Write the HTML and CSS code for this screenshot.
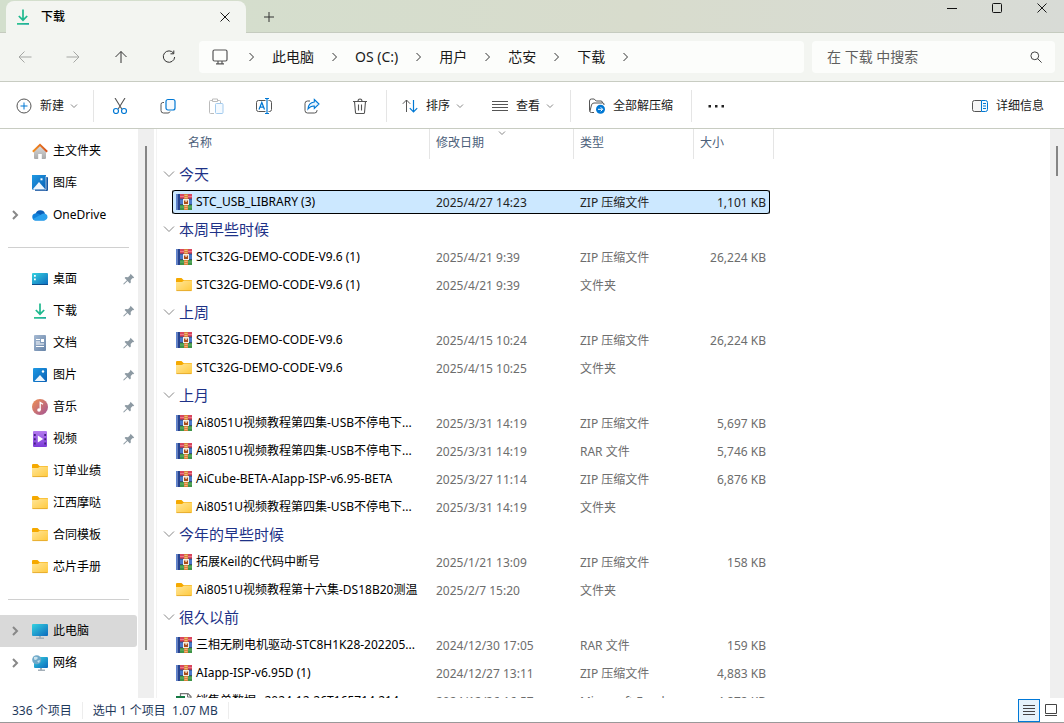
FILE: index.html
```html
<!DOCTYPE html>
<html lang="zh-CN">
<head>
    <meta charset="UTF-8">
    <meta name="viewport" content="width=device-width, initial-scale=1.0">
    <title>下载</title>
    <link rel="stylesheet" href="styles.css">
</head>
<body>
    <svg class="sprite" aria-hidden="true">
        <defs>
            <linearGradient id="g-folder" x1="0" y1="0" x2="1" y2="1"><stop offset="0" stop-color="#ffe69a"/><stop offset="1" stop-color="#ffc93c"/></linearGradient>
            <linearGradient id="g-blue" x1="0" y1="0" x2="1" y2="1"><stop offset="0" stop-color="#1f9ae4"/><stop offset="1" stop-color="#0a5fb4"/></linearGradient>
            <linearGradient id="g-screen" x1="0" y1="0" x2="1" y2="1"><stop offset="0" stop-color="#35d3e0"/><stop offset="1" stop-color="#0d69bd"/></linearGradient>
            <linearGradient id="g-down" x1="0" y1="0" x2="1" y2="1"><stop offset="0" stop-color="#36cf8b"/><stop offset="1" stop-color="#089c9c"/></linearGradient>
            <linearGradient id="g-music" x1="0" y1="0" x2="1" y2="1"><stop offset="0" stop-color="#f09252"/><stop offset="1" stop-color="#a35396"/></linearGradient>
            <linearGradient id="g-video" x1="0" y1="0" x2="0" y2="1"><stop offset="0" stop-color="#b57bef"/><stop offset="1" stop-color="#7d3bd8"/></linearGradient>
            <linearGradient id="g-doc" x1="0" y1="0" x2="1" y2="1"><stop offset="0" stop-color="#a5b9d2"/><stop offset="1" stop-color="#6784a8"/></linearGradient>
            <linearGradient id="g-house" x1="0" y1="0" x2="0" y2="1"><stop offset="0" stop-color="#dedede"/><stop offset="1" stop-color="#a9a9a9"/></linearGradient>
            <linearGradient id="g-roof" x1="0" y1="0" x2="1" y2="0"><stop offset="0" stop-color="#f5921e"/><stop offset="1" stop-color="#d5511f"/></linearGradient>
        </defs>
        <symbol id="i-folder" viewBox="0 1 16 16">
            <path d="M0 3a1 1 0 0 1 1-1h4.500l2 2H15a1 1 0 0 1 1 1v3H0z" fill="#f5a900"/>
            <path d="M0 6h6l2-1.500h7a1 1 0 0 1 1 1V14a1 1 0 0 1-1 1H1a1 1 0 0 1-1-1z" fill="url(#g-folder)"/>
            <path d="M.5 14.600h15" stroke="#e0a325" stroke-width=".8"/>
        </symbol>
        <symbol id="i-rar" viewBox="0 0 16 16">
            <path d="M4 0h12v5H4z" fill="#d9455d"/>
            <path d="M4 5h12v5.500H4z" fill="#4a78c8"/>
            <path d="M4 10.500h12V16H4z" fill="#3f9447"/>
            <path d="M4 2.500h12" stroke="#e8788a"/>
            <path d="M4 13h12" stroke="#69b56f"/>
            <path d="M4 5h12M4 10.500h12" stroke="#27386b" stroke-width=".8"/>
            <path d="M0 0h1.500v16H0z" fill="#5c82cf"/>
            <path d="M1.500 0H4v16H1.500z" fill="#26438f"/>
            <path d="M8 0h4v16H8z" fill="#d9813a"/>
            <path d="M8.500 1.500h3M8.500 3.500h3M8.500 12.500h3M8.500 14.500h3" stroke="#f4c28c" stroke-width=".8"/>
            <path d="M7 5h6v6H7z" fill="#f5efe3"/>
            <path d="M8 6.500h4V10H8z" fill="#a84d1b"/>
            <path d="M9.500 5.500h1.200V8H9.500z" fill="#f5efe3"/>
        </symbol>
        <symbol id="i-excel" viewBox="0 0 16 16">
            <path d="M4.500.6H12l3 3v11.800H4.500z" fill="#fff" stroke="#777" stroke-width="1.200"/>
            <path d="M11.500.6V4H15" fill="none" stroke="#777"/>
            <path d="M0 3h9v9H0z" fill="#157a43"/>
            <path d="M2.500 5l4 5M6.500 5l-4 5" stroke="#fff"/>
        </symbol>
        <symbol id="i-down" viewBox="0 0 16 16">
            <path d="M8 .5v10.500M3.800 7L8 11.200 12.200 7" fill="none" stroke="#1fb98f" stroke-width="1.700"/>
            <path d="M2 14h12v1.700H2z" fill="url(#g-down)"/>
        </symbol>
        <symbol id="i-home" viewBox="0 0 16 16">
            <path d="M2 7.500L8 2l6 5.500V15a1 1 0 0 1-1 1H9.800v-5H6.200v5H3a1 1 0 0 1-1-1z" fill="url(#g-house)"/>
            <path d="M.8 8.800L8 1.800l7.200 7" fill="none" stroke="url(#g-roof)" stroke-width="1.900"/>
        </symbol>
        <symbol id="i-gallery" viewBox="0 0 16 16">
            <path d="M3 2h12a1 1 0 0 1 1 1v12a1 1 0 0 1-1 1H3z" fill="#1656a2"/>
            <path d="M0 0h14v14.500H0z" fill="url(#g-blue)"/>
            <path d="M14 1v13.800H2" fill="none" stroke="#fff" stroke-width=".6"/>
            <path d="M1 14l6-7 6 7z" fill="#eef6fd"/>
            <path d="M8.500 3.300h2v2h-2z" fill="#fff"/>
        </symbol>
        <symbol id="i-picture" viewBox="0 0 16 16">
            <rect x="1" y="1" width="14" height="14" rx="1" fill="url(#g-blue)"/>
            <path d="M2.500 14L8 8l5.500 6z" fill="#eef6fd"/>
            <circle cx="11" cy="4.500" r="1.200" fill="#fff"/>
        </symbol>
        <symbol id="i-cloud" viewBox="0 0 16 16">
            <path d="M3.500 7A5 5 0 0 1 13 6.500L9 10z" fill="#0a5eb8"/>
            <path d="M3.500 13.500A3.500 3.500 0 0 1 3 6.600Q6 5.500 8.500 8l4 5.500z" fill="#1182db"/>
            <path d="M3.300 13.500Q1.500 13 1 12L10.500 6.800Q12 6 13.300 6.800A3.500 3.500 0 0 1 12.800 13.500z" fill="#2aa1ee"/>
        </symbol>
        <symbol id="i-desktop" viewBox="0 0 16 16">
            <rect y="2" width="16" height="12" rx="1" fill="url(#g-screen)"/>
            <path d="M0 13h16v1H0z" fill="#0e4d8b"/>
            <path d="M2 4h1.800v1.800H2zM2 7.500h1.800v1.800H2z" fill="#fff"/>
        </symbol>
        <symbol id="i-doc" viewBox="0 0 16 16">
            <rect x="2" y="0" width="12" height="16" rx="1" fill="url(#g-doc)"/>
            <path d="M4 4.500h4M4 7h4M4 9h8M4 11.500h8" stroke="#fff"/>
            <path d="M9 4h3v3H9z" fill="#fff"/>
        </symbol>
        <symbol id="i-music" viewBox="0 0 16 16">
            <circle cx="8" cy="8" r="8" fill="url(#g-music)"/>
            <circle cx="7" cy="11" r="1.800" fill="#fff"/>
            <path d="M8.200 11V3.500l2.800 1.700" fill="none" stroke="#fff" stroke-width="1.300"/>
        </symbol>
        <symbol id="i-video" viewBox="0 0 16 16">
            <rect x="1" y="0" width="14" height="16" rx="1" fill="url(#g-video)"/>
            <path d="M2.800 3v11M13.200 3v11" stroke="#43207f" stroke-width="1.800" stroke-dasharray="2 2.200"/>
            <path d="M5.800 4.500l5.400 3.500-5.400 3.500z" fill="#fff"/>
        </symbol>
        <symbol id="i-pc" viewBox="0 0 16 16">
            <rect y="1" width="16" height="12" rx="1" fill="url(#g-screen)"/>
            <path d="M7 13h2v1.500h3V16H4v-1.500h3z" fill="#a4afb8"/>
        </symbol>
        <symbol id="i-net" viewBox="0 0 16 16">
            <rect x="2" y="2" width="14" height="11" rx="1" fill="url(#g-screen)"/>
            <path d="M8 13h2v1.500h3V16H6v-1.500h2z" fill="#a4afb8"/>
            <circle cx="4.700" cy="4.700" r="4.500" fill="#6fa9c9"/>
            <path d="M2 2q3-1 4 1l-2 2-2-.5zM5 6l3-1-1 3z" fill="#c9e3ee"/>
        </symbol>
        <symbol id="i-pin" viewBox="0 0 12 12">
            <path d="M7.500.8l3.700 3.700-1 .7-.5-.1-2 2 .1 2.400-.9.900-2.400-2.400L1.200 11.300l-.8.100.1-.8L3.900 7.300 1.600 5l.9-.9 2.500.1 2-2z" fill="#8d9aa3"/>
        </symbol>
        <symbol id="i-right" viewBox="0 0 10 10"><path d="M3 1l4 4-4 4" fill="none" stroke="currentColor"/></symbol>
        <symbol id="i-chev" viewBox="0 0 12 12"><path d="M1 3.500l5 5 5-5" fill="none" stroke="currentColor"/></symbol>
        <symbol id="i-mini" viewBox="0 0 8 8"><path d="M1 2.500l3 3 3-3" fill="none" stroke="currentColor"/></symbol>
        <symbol id="i-close" viewBox="0 0 12 12"><path d="M1.500 1.500l9 9M10.500 1.500l-9 9" fill="none" stroke="currentColor"/></symbol>
    </svg>

    <header class="titlebar">
        <div class="tab">
            <svg class="icon"><use href="#i-down"/></svg>
            <span class="tab-title">下载</span>
            <button class="tab-close" aria-label="关闭标签页"><svg class="small"><use href="#i-close"/></svg></button>
        </div>
        <button class="tab-add" aria-label="新建标签页"><svg class="small" viewBox="0 0 12 12"><path d="M6 1v10M1 6h10" stroke="#333"/></svg></button>
        <div class="window-buttons">
            <button aria-label="最小化"><svg class="small" viewBox="0 0 12 12"><path d="M1 6.500h10" stroke="#111"/></svg></button>
            <button aria-label="最大化"><svg class="small" viewBox="0 0 12 12"><rect x="1.500" y="1.500" width="9" height="9" rx="1" fill="none" stroke="#111"/></svg></button>
            <button aria-label="关闭"><svg class="small"><use href="#i-close"/></svg></button>
        </div>
    </header>

    <div class="navbar">
        <div class="nav-buttons">
            <button aria-label="后退" disabled><svg class="icon" viewBox="0 0 16 16"><path d="M14.500 8H2M7.500 2.500L2 8l5.500 5.500"/></svg></button>
            <button aria-label="前进" disabled><svg class="icon" viewBox="0 0 16 16"><path d="M1.500 8H14M8.500 2.500L14 8l-5.500 5.500"/></svg></button>
            <button aria-label="向上"><svg class="icon" viewBox="0 0 16 16"><path d="M8 14V2.500M2.500 8L8 2.500 13.500 8"/></svg></button>
            <button aria-label="刷新"><svg class="icon" viewBox="0 0 16 16"><path d="M12.600 4.200A5.700 5.700 0 1 0 13.700 8M12.800 1.500v3.300H9.500"/></svg></button>
        </div>
        <nav class="address" aria-label="地址栏">
            <svg class="pc-icon" viewBox="0 0 18 18"><path d="M3.500 2h11A1.500 1.500 0 0 1 16 3.500v8a1.500 1.500 0 0 1-1.500 1.500h-11A1.500 1.500 0 0 1 2 11.500v-8A1.500 1.500 0 0 1 3.500 2zM7 13v2.500M11 13v2.500M5 15.800h8" fill="none" stroke="#555" stroke-width="1.200"/></svg>
            <svg class="sep"><use href="#i-right"/></svg>
            <a href="#">此电脑</a>
            <svg class="sep"><use href="#i-right"/></svg>
            <a href="#">OS (C:)</a>
            <svg class="sep"><use href="#i-right"/></svg>
            <a href="#">用户</a>
            <svg class="sep"><use href="#i-right"/></svg>
            <a href="#">芯安</a>
            <svg class="sep"><use href="#i-right"/></svg>
            <a href="#">下载</a>
            <svg class="sep"><use href="#i-right"/></svg>
        </nav>
        <label class="search">
            <input type="text" placeholder="在 下载 中搜索" aria-label="搜索">
            <svg class="small" viewBox="0 0 12 12"><circle cx="4.800" cy="4.800" r="3.900" fill="none" stroke="#444"/><path d="M7.600 7.600l4 4" stroke="#444"/></svg>
        </label>
    </div>

    <div class="toolbar">
        <button class="tool new">
            <svg class="icon" viewBox="0 0 16 16"><circle cx="8" cy="8" r="7" fill="none" stroke="#555"/><path d="M8 4.500v7M4.500 8h7" stroke="#0078d4"/></svg>
            新建<svg class="mini"><use href="#i-mini"/></svg>
        </button>
        <div class="icons">
            <button aria-label="剪切"><svg class="icon" viewBox="0 0 16 16"><path d="M3 0l6.800 11M13 0L6.200 11" fill="none" stroke="#555" stroke-width="1.100"/><circle cx="4" cy="13" r="2.500" fill="none" stroke="#0078d4" stroke-width="1.200"/><circle cx="12" cy="13" r="2.500" fill="none" stroke="#0078d4" stroke-width="1.200"/></svg></button>
            <button aria-label="复制"><svg class="icon" viewBox="0 0 16 16"><path d="M4 4.500H2.800Q1 4.500 1 6.500v6Q1 15 3.500 15H8q1.500 0 2-1.500" fill="none" stroke="#555"/><rect x="6" y="1.500" width="9" height="10.500" rx="2" fill="#f4faff" stroke="#0078d4" stroke-width="1.200"/></svg></button>
            <button aria-label="粘贴" disabled><svg class="icon" viewBox="0 0 16 16"><path d="M6 15.500H2.500q-1 0-1-1v-11q0-1 1-1h2m5 0h2q1 0 1 1V5M4.500 1h5v2.500h-5z" fill="none" stroke="#bbb"/><rect x="7.500" y="5.500" width="7.500" height="10" rx="1" fill="#f4faff" stroke="#a3cbee"/></svg></button>
            <button aria-label="重命名"><svg class="icon" viewBox="0 0 16 16"><path d="M9.500 2.500h-7Q.5 2.500.5 4.500v7q0 2 2 2h7M12.500 2.500h1q2 0 2 2v7q0 2-2 2h-1" fill="none" stroke="#555"/><path d="M11 .5v15M9 .5h4M9 15.500h4M3 11.500L5.800 4.500l2.700 7M4 9.200h3.600" fill="none" stroke="#0078d4" stroke-width="1.200"/></svg></button>
            <button aria-label="共享"><svg class="icon" viewBox="0 0 16 16"><path d="M6 3H3.500Q1 3 1 5.500v7Q1 15 3.500 15h7q2.500 0 2.500-2.500V12" fill="none" stroke="#555"/><path d="M10.300 1.500L15 6l-4.700 4.500V8Q6.500 7.800 4 11q.3-6.300 6.300-7z" fill="#e7f4fe" stroke="#0078d4" stroke-width="1.100"/></svg></button>
            <button aria-label="删除"><svg class="icon" viewBox="0 0 16 16"><path d="M1 3.500h14M6 3.500q0-2.500 2-2.500t2 2.500M2.500 3.500l1 11q.1 1 1 1h7q.9 0 1-1l1-11M6.500 6.500v6M9.500 6.500v6" fill="none" stroke="#555" stroke-width="1.100"/></svg></button>
        </div>
        <button class="tool">
            <svg class="icon" viewBox="0 0 16 16"><path d="M4.500 14V2M.8 5.800L4.500 2l3.700 3.800" fill="none" stroke="#555"/><path d="M11.500 2v12M7.800 10.200l3.700 3.800 3.700-3.800" fill="none" stroke="#0078d4" stroke-width="1.200"/></svg>
            排序<svg class="mini"><use href="#i-mini"/></svg>
        </button>
        <button class="tool view">
            <svg class="icon" viewBox="0 0 16 16"><path d="M0 3.500h16M0 6.500h16M0 9.500h16M0 12.500h16" stroke="#555"/></svg>
            查看<svg class="mini"><use href="#i-mini"/></svg>
        </button>
        <button class="tool extract">
            <svg class="icon" viewBox="0 0 16 16"><path d="M5 14.500H2.500q-2 0-2-2V3q0-2 2-2h2.700l2 2H12q1.500 0 1.500 2M1 13l1.500-6q.5-2 2.500-2h8.500q2 0 1.500 2" fill="none" stroke="#555"/><circle cx="11.500" cy="11.300" r="4.500" fill="#0078d4"/><path d="M9 11.300h4.500M11.700 9.300l2 2-2 2" fill="none" stroke="#fff"/></svg>
            全部解压缩
        </button>
        <button class="more" aria-label="更多"><svg class="icon" viewBox="0 0 16 16"><path d="M.5 7h2.500v2.500H.5zM7 7h2.500v2.500H7zM13.500 7H16v2.500h-2.500z" fill="#222"/></svg></button>
        <button class="tool details">
            <svg class="icon" viewBox="0 0 16 16"><path d="M9.500 2.500h-7Q.5 2.500.5 4.500v7q0 2 2 2h7" fill="#f6f6f6" stroke="#555"/><path d="M9.500 2.500h4q2 0 2 2v7q0 2-2 2h-4zM11 5.500h3M11 8h3M11 10.500h3" fill="#f4faff" stroke="#0078d4"/></svg>
            详细信息
        </button>
    </div>

    <main class="content">
        <aside class="sidebar">
            <ul class="tree">
                <li><svg class="icon"><use href="#i-home"/></svg>主文件夹</li>
                <li><svg class="icon"><use href="#i-gallery"/></svg>图库</li>
                <li class="parent"><svg class="arrow"><use href="#i-right"/></svg><svg class="icon"><use href="#i-cloud"/></svg>OneDrive</li>
            </ul>
            <ul class="tree">
                <li><svg class="icon"><use href="#i-desktop"/></svg>桌面<svg class="pin"><use href="#i-pin"/></svg></li>
                <li><svg class="icon"><use href="#i-down"/></svg>下载<svg class="pin"><use href="#i-pin"/></svg></li>
                <li><svg class="icon"><use href="#i-doc"/></svg>文档<svg class="pin"><use href="#i-pin"/></svg></li>
                <li><svg class="icon"><use href="#i-picture"/></svg>图片<svg class="pin"><use href="#i-pin"/></svg></li>
                <li><svg class="icon"><use href="#i-music"/></svg>音乐<svg class="pin"><use href="#i-pin"/></svg></li>
                <li><svg class="icon"><use href="#i-video"/></svg>视频<svg class="pin"><use href="#i-pin"/></svg></li>
                <li><svg class="icon"><use href="#i-folder"/></svg>订单业绩</li>
                <li><svg class="icon"><use href="#i-folder"/></svg>江西摩哒</li>
                <li><svg class="icon"><use href="#i-folder"/></svg>合同模板</li>
                <li><svg class="icon"><use href="#i-folder"/></svg>芯片手册</li>
            </ul>
            <ul class="tree">
                <li class="parent active"><svg class="arrow"><use href="#i-right"/></svg><svg class="icon"><use href="#i-pc"/></svg>此电脑</li>
                <li class="parent"><svg class="arrow"><use href="#i-right"/></svg><svg class="icon"><use href="#i-net"/></svg>网络</li>
            </ul>
        </aside>
        <div class="scrollbar side-scroll"><div class="thumb"></div></div>

        <section class="files">
            <table class="list">
                <colgroup><col class="c-gap"><col class="c-name"><col class="c-date"><col class="c-type"><col class="c-size"><col class="c-end"></colgroup>
                <thead>
                    <tr><th colspan="2" class="h-name">名称</th><th class="sorted">修改日期<svg class="mini"><use href="#i-mini"/></svg></th><th>类型</th><th colspan="2">大小</th></tr>
                </thead>
                <tbody>
                    <tr class="group"><th colspan="6"><svg class="small"><use href="#i-chev"/></svg>今天</th></tr>
                    <tr class="selected"><td></td><td><svg class="icon"><use href="#i-rar"/></svg>STC_USB_LIBRARY (3)</td><td>2025/4/27 14:23</td><td>ZIP 压缩文件</td><td>1,101 KB</td><td></td></tr>
                </tbody>
                <tbody>
                    <tr class="group"><th colspan="6"><svg class="small"><use href="#i-chev"/></svg>本周早些时候</th></tr>
                    <tr><td></td><td><svg class="icon"><use href="#i-rar"/></svg>STC32G-DEMO-CODE-V9.6 (1)</td><td>2025/4/21 9:39</td><td>ZIP 压缩文件</td><td>26,224 KB</td><td></td></tr>
                    <tr><td></td><td><svg class="icon"><use href="#i-folder"/></svg>STC32G-DEMO-CODE-V9.6 (1)</td><td>2025/4/21 9:39</td><td>文件夹</td><td></td><td></td></tr>
                </tbody>
                <tbody>
                    <tr class="group"><th colspan="6"><svg class="small"><use href="#i-chev"/></svg>上周</th></tr>
                    <tr><td></td><td><svg class="icon"><use href="#i-rar"/></svg>STC32G-DEMO-CODE-V9.6</td><td>2025/4/15 10:24</td><td>ZIP 压缩文件</td><td>26,224 KB</td><td></td></tr>
                    <tr><td></td><td><svg class="icon"><use href="#i-folder"/></svg>STC32G-DEMO-CODE-V9.6</td><td>2025/4/15 10:25</td><td>文件夹</td><td></td><td></td></tr>
                </tbody>
                <tbody>
                    <tr class="group"><th colspan="6"><svg class="small"><use href="#i-chev"/></svg>上月</th></tr>
                    <tr><td></td><td><svg class="icon"><use href="#i-rar"/></svg>Ai8051U视频教程第四集-USB不停电下...</td><td>2025/3/31 14:19</td><td>ZIP 压缩文件</td><td>5,697 KB</td><td></td></tr>
                    <tr><td></td><td><svg class="icon"><use href="#i-rar"/></svg>Ai8051U视频教程第四集-USB不停电下...</td><td>2025/3/31 14:19</td><td>RAR 文件</td><td>5,746 KB</td><td></td></tr>
                    <tr><td></td><td><svg class="icon"><use href="#i-rar"/></svg>AiCube-BETA-AIapp-ISP-v6.95-BETA</td><td>2025/3/27 11:14</td><td>ZIP 压缩文件</td><td>6,876 KB</td><td></td></tr>
                    <tr><td></td><td><svg class="icon"><use href="#i-folder"/></svg>Ai8051U视频教程第四集-USB不停电下...</td><td>2025/3/31 14:19</td><td>文件夹</td><td></td><td></td></tr>
                </tbody>
                <tbody>
                    <tr class="group"><th colspan="6"><svg class="small"><use href="#i-chev"/></svg>今年的早些时候</th></tr>
                    <tr><td></td><td><svg class="icon"><use href="#i-rar"/></svg>拓展Keil的C代码中断号</td><td>2025/1/21 13:09</td><td>ZIP 压缩文件</td><td>158 KB</td><td></td></tr>
                    <tr><td></td><td><svg class="icon"><use href="#i-folder"/></svg>Ai8051U视频教程第十六集-DS18B20测温</td><td>2025/2/7 15:20</td><td>文件夹</td><td></td><td></td></tr>
                </tbody>
                <tbody>
                    <tr class="group"><th colspan="6"><svg class="small"><use href="#i-chev"/></svg>很久以前</th></tr>
                    <tr><td></td><td><svg class="icon"><use href="#i-rar"/></svg>三相无刷电机驱动-STC8H1K28-202205...</td><td>2024/12/30 17:05</td><td>RAR 文件</td><td>159 KB</td><td></td></tr>
                    <tr><td></td><td><svg class="icon"><use href="#i-rar"/></svg>AIapp-ISP-v6.95D (1)</td><td>2024/12/27 13:11</td><td>ZIP 压缩文件</td><td>4,883 KB</td><td></td></tr>
                    <tr><td></td><td><svg class="icon"><use href="#i-excel"/></svg>销售单数据 _2024-12-26T165714.214...</td><td>2024/12/26 16:57</td><td>Microsoft Excel ...</td><td>4,872 KB</td><td></td></tr>
                </tbody>
            </table>
        </section>
        <div class="scrollbar"><div class="thumb"></div></div>
    </main>

    <footer class="status">
        <span>336 个项目</span>
        <span>选中 1 个项目&nbsp; 1.07 MB</span>
        <div class="layouts">
            <button class="on" aria-label="详细信息视图"><svg class="icon" viewBox="0 0 16 16"><path d="M2 3.500h12M2 6.500h12M2 9.500h12M2 12.500h12" stroke="#444"/></svg></button>
            <button aria-label="大图标视图"><svg class="icon" viewBox="0 0 16 16"><path d="M2.500 2.500h11v9h-11zM2 13.500h12" fill="none" stroke="#444"/></svg></button>
        </div>
    </footer>
</body>
</html>
```

FILE: styles.css
```css
* {
    box-sizing: border-box;
}
body {
    margin: 0;
    height: 100vh;
    display: flex;
    flex-direction: column;
    overflow: hidden;
    background-color: #fff;
    color: #000;
    font-family: "Noto Sans", "Noto Sans CJK SC", sans-serif;
    font-size: 12px;
    line-height: 16px;
}
button {
    display: flex;
    align-items: center;
    justify-content: center;
    padding: 0;
    border: none;
    background: transparent;
    color: #1a1a1a;
    font: inherit;
}
svg {
    flex: none;
}
.sprite {
    position: absolute;
    width: 0;
    height: 0;
}
.icon {
    width: 16px;
    height: 16px;
}
.small {
    width: 12px;
    height: 12px;
}
.mini {
    width: 8px;
    height: 8px;
    color: #888;
}

/* title bar */
.titlebar {
    display: flex;
    flex: none;
    height: 33px;
    padding-left: 6px;
    background: linear-gradient(90deg, #d3dfcd, #d8dccd 60%, #d8dbd6);
    box-shadow: inset 0 -1px #c5cbbf;
}
.tab {
    display: flex;
    align-items: center;
    width: 240px;
    margin-top: 1px;
    padding: 0 15px 0 9px;
    border-radius: 8px 8px 0 0;
    background-color: #f3f5f1;
}
.tab-title {
    flex: 1;
    margin-left: 10px;
    font-weight: 500;
}
.tab-add {
    width: 46px;
}
.window-buttons {
    display: flex;
    margin-left: auto;
    height: 16px;
}
.window-buttons button {
    width: 45px;
}

/* address row */
.navbar {
    display: flex;
    flex: none;
    align-items: center;
    gap: 8px;
    height: 49px;
    padding: 0 9px 0 1px;
    border-bottom: 1px solid #c8ccc2;
    background-color: #f3f5f1;
    font-size: 14px;
}
.nav-buttons {
    display: flex;
    flex: none;
    width: 190px;
}
.nav-buttons button {
    flex: none;
    width: 48px;
    height: 32px;
}
.nav-buttons path {
    fill: none;
    stroke: #333;
}
.nav-buttons button:disabled path {
    stroke: #a5a7a4;
}
.address {
    display: flex;
    flex: 1;
    align-items: center;
    height: 32px;
    padding-left: 12px;
    border-radius: 4px;
    background-color: #fcfdfb;
}
.address a {
    color: #1a1a1a;
    text-decoration: none;
}
.pc-icon {
    width: 18px;
    height: 18px;
    margin-right: 2px;
}
.sep {
    width: 41px;
    height: 10px;
    color: #333;
}
.search {
    display: flex;
    align-items: center;
    width: 243px;
    height: 32px;
    padding: 0 13px 0 15px;
    border-radius: 4px;
    background-color: #fcfdfb;
}
.search input {
    flex: 1;
    min-width: 0;
    padding: 0;
    border: none;
    background: transparent;
    font: inherit;
}
.search input::placeholder {
    color: #5f5f5f;
}

/* command bar */
.toolbar {
    display: flex;
    flex: none;
    align-items: center;
    height: 47px;
    padding: 2px 20px 0 16px;
    border-bottom: 1px solid #c8ccc2;
}
.tool {
    gap: 8px;
    height: 32px;
}
.tool .mini {
    margin-left: -2px;
}
.new {
    margin-right: 15px;
}
.icons {
    display: flex;
    padding: 0 2px;
    margin-right: 15px;
    border: solid #e5e5e5;
    border-width: 0 1px;
}
.icons button {
    width: 48px;
    height: 32px;
}
.view {
    margin: 0 16px 0 28px;
}
.extract {
    padding: 0 18px;
    border: solid #e5e5e5;
    border-width: 0 1px;
}
.more {
    width: 48px;
    height: 32px;
}
.details {
    margin-left: auto;
}

/* body */
.content {
    display: flex;
    flex: 1;
    min-height: 0;
}
.sidebar {
    width: 138px;
    padding-top: 6px;
    overflow: hidden;
}
.tree {
    margin: 0;
    padding: 0;
    list-style: none;
}
.tree + .tree::before {
    content: "";
    display: block;
    height: 1px;
    margin: 16px 9px 15px 8px;
    background-color: #d0d0d0;
}
.tree li {
    display: flex;
    align-items: center;
    gap: 5px;
    height: 32px;
    margin-right: 1px;
    padding: 0 2px 0 32px;
}
.tree .parent {
    padding-left: 10px;
}
.tree .active {
    border-radius: 0 3px 3px 0;
    background-color: #d9d9d9;
}
.arrow {
    width: 10px;
    height: 10px;
    margin-right: 7px;
    color: #888;
    stroke-width: 2px;
}
.pin {
    width: 12px;
    height: 12px;
    margin-left: auto;
}
.scrollbar {
    width: 14px;
    padding-top: 17px;
    background-color: #efefef;
}
.side-scroll {
    width: 16px;
}
.thumb {
    width: 2px;
    height: 30px;
    margin: 0 auto;
    background-color: #858585;
}
.side-scroll .thumb {
    height: calc(100% - 48px);
}
.files {
    flex: 1;
    margin-left: 2px;
    overflow: hidden;
    border-left: 1px solid #f3f3f3;
}

/* the row spacing also applies above the header, so it is pulled up */
.list {
    width: 617px;
    margin-top: -4px;
    table-layout: fixed;
    border-spacing: 0 4px;
}
.c-gap {
    width: 15px;
}
.c-date {
    width: 144px;
}
.c-type {
    width: 120px;
}
.c-size {
    width: 76px;
}
.c-end {
    width: 4px;
}
.list th,
.list td {
    height: 24px;
    padding: 2px 6px 0;
    overflow: hidden;
    text-align: left;
    font-weight: 400;
    white-space: nowrap;
    color: #6d6d6d;
}
.list thead th {
    position: relative;
    height: 30px;
    padding: 0 6px 2px;
    border-right: 1px solid #e5e5e5;
    color: #4c607a;
}
.list thead .h-name {
    padding-left: 31px;
}
.sorted .mini {
    position: absolute;
    top: 0;
    left: 68px;
}
.list .group th {
    height: 23px;
    padding: 0 6px 2px;
    color: #1e3287;
    font-size: 15px;
}
.group .small {
    margin-right: 4px;
    color: #888;
}
.list td:first-child,
.list td:last-child {
    padding: 0;
}
.list td:nth-child(2) {
    padding: 2px 0 0 4px;
    color: #000;
}
.list td:nth-child(5) {
    padding: 2px 4px 0 0;
    text-align: right;
}
.list .icon {
    margin: 0 4px 2px 0;
    vertical-align: middle;
}
.selected td:nth-child(n+2):nth-child(-n+5) {
    background-color: #cce8ff;
    box-shadow: inset 0 1px #000, inset 0 -1px #000;
    color: #222;
}
.selected td:nth-child(2) {
    border-left: 1px solid #000;
    border-radius: 2px 0 0 2px;
}
.list .selected td:nth-child(2) {
    padding-left: 3px;
    color: #000;
}
.selected td:nth-child(5) {
    border-right: 1px solid #000;
    border-radius: 0 2px 2px 0;
}
.list .selected td:nth-child(5) {
    padding-right: 3px;
}

/* status bar */
.status {
    display: flex;
    flex: none;
    align-items: center;
    height: 25px;
    padding-left: 2px;
    border-bottom: 1px solid #999;
    color: #1e395b;
}
.status span {
    padding: 1px 10px 0;
    border-right: 1px solid #ededed;
}
.layouts {
    display: flex;
    margin-left: auto;
    padding-right: 2px;
}
.layouts button {
    width: 22px;
    height: 23px;
}
.layouts .on {
    border: 1px solid #0078d7;
    background-color: #e5f3fb;
}
```
